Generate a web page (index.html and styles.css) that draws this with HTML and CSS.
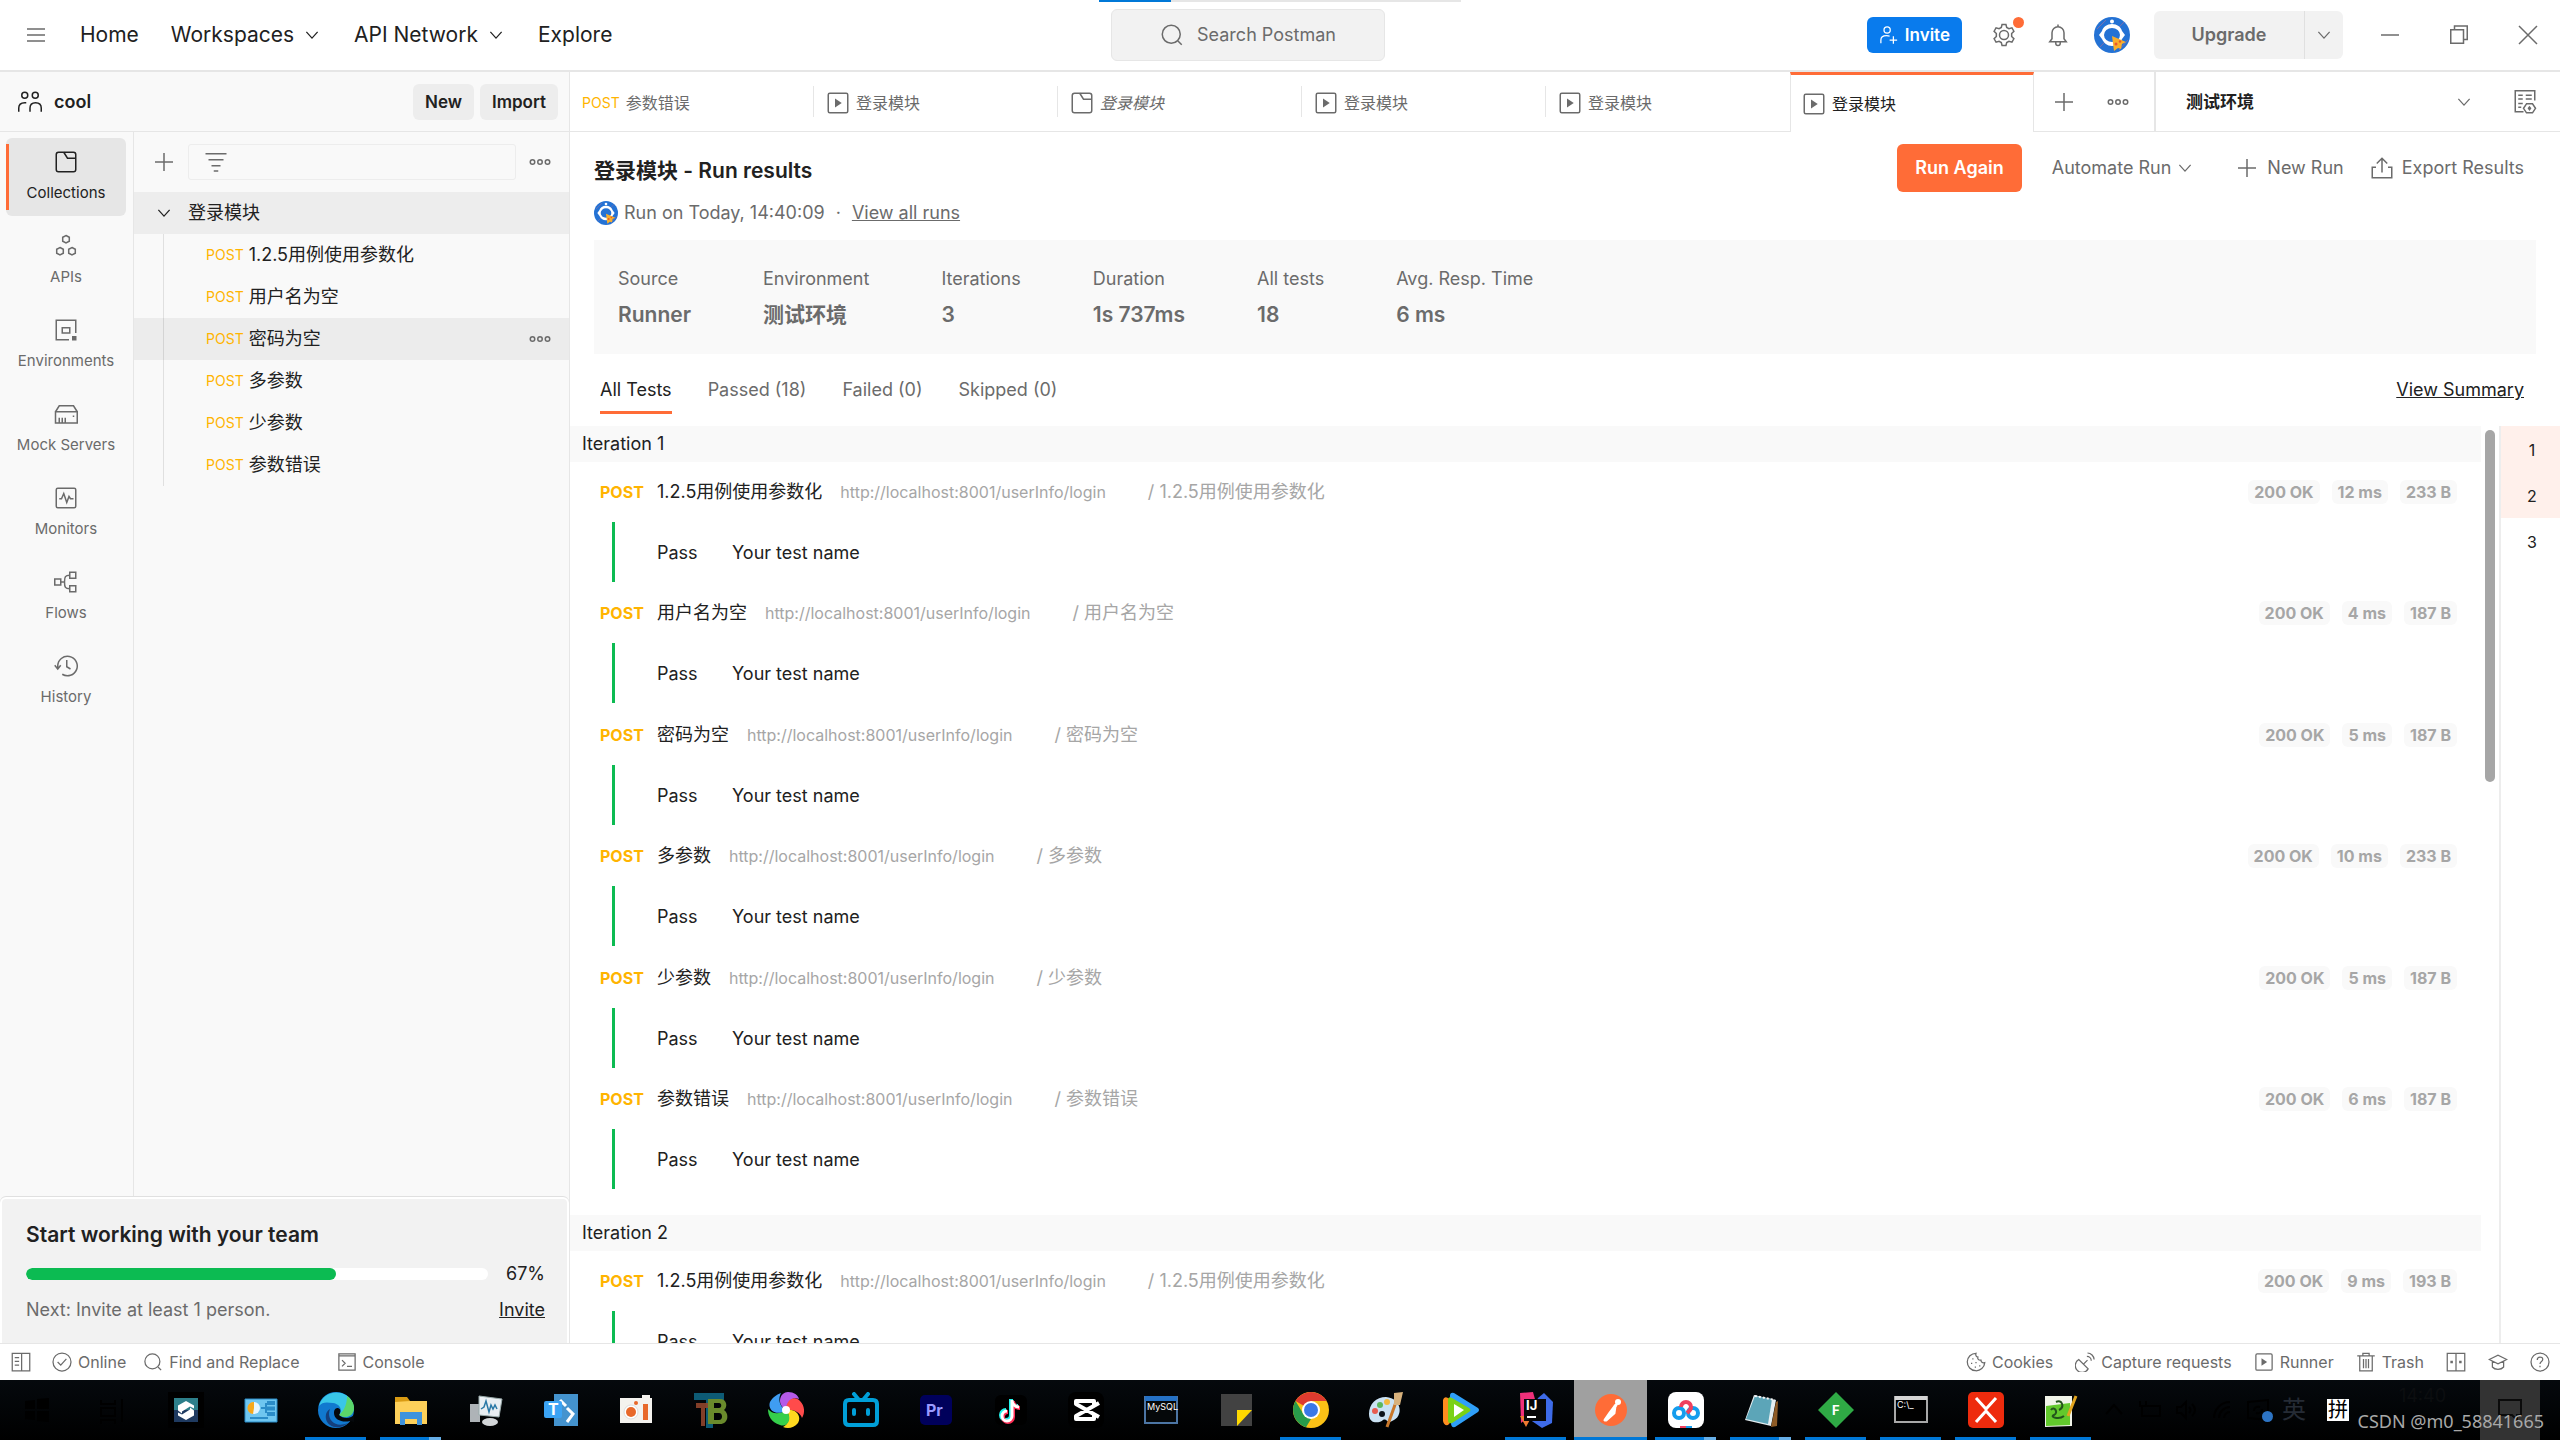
FILE: index.html
```html
<!DOCTYPE html>
<html lang="en">
<head>
  <meta charset="UTF-8">
  <title>登录模块 - Run results</title>
  <link rel="stylesheet" href="styles.css">
</head>
<body>
  <!-- shared icons -->
  <svg class="sprite" aria-hidden="true">
    <symbol id="i-chevron" viewBox="0 0 16 16"><path d="M3.500 5.500 8 10.500l4.500-5"/></symbol>
    <symbol id="i-plus" viewBox="0 0 16 16"><path d="M8 2v12M2 8h12"/></symbol>
    <symbol id="i-dots" viewBox="0 0 16 16"><circle cx="3" cy="8" r="1.500"/><circle cx="8" cy="8" r="1.500"/><circle cx="13" cy="8" r="1.500"/></symbol>
    <symbol id="i-search" viewBox="0 0 16 16"><circle cx="7.500" cy="7.500" r="6"/><path d="m12 12 2.500 2.500"/></symbol>
    <symbol id="i-runner" viewBox="0 0 16 16"><rect x="1.500" y="1.500" width="13" height="13" rx="1"/><path class="solid" d="M6 5v6l4.500-3z"/></symbol>
    <symbol id="i-collection" viewBox="0 0 16 16"><rect x="1.500" y="1.500" width="13" height="13" rx="1.500"/><path d="M6.500 1.500 9 5.500h5.500"/></symbol>
    <symbol id="i-avatar" viewBox="0 0 36 36"><circle class="av-bg" cx="18" cy="18" r="18"/><path class="av-line" d="m3 12 9-9M6 30 30 5M25 33l9-10"/><path class="av-dot" d="M18 7c5 0 9 3 10 7l3 4-3 4c-2 4-5 7-10 7s-8-3-10-7l-3-4 3-4c1-4 5-7 10-7z"/><ellipse class="av-bg" cx="18" cy="18" rx="8" ry="7"/><circle class="av-dot" cx="18" cy="4.500" r="2"/><path class="av-pizza" d="m18 19 14 6-4 2-1 5-3-1-4 3z"/><circle class="av-top" cx="22" cy="27" r="1.500"/><circle class="av-top" cx="26" cy="24.500" r="1.200"/></symbol>
  </svg>

  <header class="topbar">
    <div class="loading-bar"><div class="loading-value"></div></div>
    <nav class="main-nav">
      <button class="menu-btn" aria-label="Menu"><svg class="icon" viewBox="0 0 16 16"><path d="M2 4h12M2 8h12M2 12h12"/></svg></button>
      <a href="#">Home</a>
      <a href="#">Workspaces <svg class="icon small"><use href="#i-chevron"/></svg></a>
      <a href="#">API Network <svg class="icon small"><use href="#i-chevron"/></svg></a>
      <a href="#">Explore</a>
    </nav>
    <button class="search-btn"><svg class="icon"><use href="#i-search"/></svg>Search Postman</button>
    <div class="top-actions">
      <button class="invite-btn"><svg class="icon small" viewBox="0 0 16 16"><circle cx="6.500" cy="4" r="2.500"/><path d="M1.500 14.500V12c0-2.500 2-3.500 4.500-3.500 1 0 2 .2 2.500.5M11.500 9v6M8.500 12h6"/></svg>Invite</button>
      <button class="icon-btn has-alert" aria-label="Settings"><svg class="icon" viewBox="0 0 16 16"><path d="M6.700 1h2.600l.5 2 1.500.8 2-.6 1.300 2.300L13.100 7v2l1.500 1.500-1.300 2.300-2-.6-1.500.8-.5 2H6.700l-.5-2-1.500-.8-2 .6-1.300-2.300L2.900 9V7L1.400 5.500l1.300-2.300 2 .6L6.200 3z"/><circle cx="8" cy="8" r="3"/></svg><span class="alert-dot"></span></button>
      <button class="icon-btn" aria-label="Notifications"><svg class="icon" viewBox="0 0 16 16"><path d="M2.500 12.500h11L12 10.500V6.500a4 4 0 0 0-8 0v4zM6.500 13v.5a1.500 1.500 0 0 0 3 0V13M8 1v1.500"/></svg></button>
      <button class="icon-btn profile" aria-label="Profile"><svg class="avatar"><use href="#i-avatar"/></svg></button>
      <div class="upgrade">
        <button class="upgrade-btn">Upgrade</button>
        <button class="upgrade-more" aria-label="More plans"><svg class="icon small"><use href="#i-chevron"/></svg></button>
      </div>
      <div class="window-controls">
        <button aria-label="Minimize"><svg class="icon" viewBox="0 0 16 16"><path d="M2 8h12"/></svg></button>
        <button aria-label="Restore"><svg class="icon" viewBox="0 0 16 16"><path d="M2.500 4.500h8.500v9H2.500zM5 4.500v-2.500h8.500v9H11"/></svg></button>
        <button aria-label="Close"><svg class="icon" viewBox="0 0 16 16"><path d="m2 2 12 12M14 2 2 14"/></svg></button>
      </div>
    </div>
  </header>

  <div class="workspace">
    <aside class="left">
      <div class="workspace-head">
        <svg class="icon dark" viewBox="0 0 16 16"><circle cx="4.500" cy="3.500" r="2"/><circle cx="11.500" cy="3.500" r="2"/><path d="M.5 14.500V12c0-2.500 1.500-3.500 4-3.500h1M8 14.500V12c0-2.500 1.200-3.500 3.700-3.500S15.500 9.500 15.500 12v2.500"/></svg>
        <strong>cool</strong>
        <button class="grey-btn">New</button>
        <button class="grey-btn">Import</button>
      </div>
      <div class="left-body">
        <nav class="rail">
          <a href="#" class="rail-item active"><svg class="icon"><use href="#i-collection"/></svg>Collections</a>
          <a href="#" class="rail-item"><svg class="icon" viewBox="0 0 16 16"><path d="m8 1 2.200 1.200v2.600L8 6 5.800 4.800V2.200zM4 9l2.200 1.200v2.600L4 14l-2.200-1.200v-2.600zM12 9l2.200 1.200v2.600L12 14l-2.200-1.200v-2.600z"/></svg>APIs</a>
          <a href="#" class="rail-item"><svg class="icon" viewBox="0 0 16 16"><path d="M10 14.500H1.500v-13h13V10M5.500 6.500h5v3.500h-5z"/><path class="solid" d="M12 12h3v3h-3z"/></svg>Environments</a>
          <a href="#" class="rail-item"><svg class="icon" viewBox="0 0 16 16"><path d="M1 6.500h14.500V14H1zM1 6.500 3.500 2.500H13l2.500 4M3.500 10.500V14M5.500 10.500V14M7.500 10.500V14M12.500 9.500h1"/></svg>Mock Servers</a>
          <a href="#" class="rail-item"><svg class="icon" viewBox="0 0 16 16"><rect x="1.500" y="1.500" width="13" height="13" rx="1"/><path d="M3.500 8.500h1.500L6.500 5l2 6 1.500-4 1 1.500h2"/></svg>Monitors</a>
          <a href="#" class="rail-item"><svg class="icon" viewBox="0 0 16 16"><rect x=".5" y="6" width="4" height="4"/><rect x="10.500" y="1.500" width="4" height="4"/><rect x="10.500" y="10.500" width="4" height="4"/><path d="M4.500 8h2M10.500 3.500c-3 0-3.500 1-3.500 4.500 0 3.500.5 4.500 3.500 4.500"/></svg>Flows</a>
          <a href="#" class="rail-item"><svg class="icon" viewBox="0 0 16 16"><path d="M2.500 9.500V8a6.500 6.500 0 1 1 3 5.500M.5 7.500l2 2.500 2-2.500M8.500 4v4.500L11 10"/></svg>History</a>
        </nav>
        <div class="sidebar">
          <div class="filter-row">
            <button class="icon-btn" aria-label="Create"><svg class="icon"><use href="#i-plus"/></svg></button>
            <label class="filter"><svg class="icon" viewBox="0 0 16 16"><path d="M1 2.500h14M3 6.500h10M5 10.500h6M6.500 14h3"/></svg><input type="text" aria-label="Filter collections"></label>
            <button class="icon-btn" aria-label="More"><svg class="icon dots"><use href="#i-dots"/></svg></button>
          </div>
          <div class="tree-root"><svg class="icon small dark"><use href="#i-chevron"/></svg>登录模块</div>
          <ul class="tree">
            <li><span class="method">POST</span>1.2.5用例使用参数化</li>
            <li><span class="method">POST</span>用户名为空</li>
            <li class="hovered"><span class="method">POST</span>密码为空<button class="icon-btn" aria-label="Request options"><svg class="icon dots"><use href="#i-dots"/></svg></button></li>
            <li><span class="method">POST</span>多参数</li>
            <li><span class="method">POST</span>少参数</li>
            <li><span class="method">POST</span>参数错误</li>
          </ul>
        </div>
      </div>
      <section class="team-card">
        <h2>Start working with your team</h2>
        <div class="team-progress">
          <div class="track"><div class="value" style="width: 67%"></div></div>
          <span>67%</span>
        </div>
        <div class="team-next"><span>Next: Invite at least 1 person.</span><a href="#">Invite</a></div>
      </section>
    </aside>

    <main class="content">
      <div class="tabbar">
        <button class="tab"><span class="method">POST</span>参数错误</button>
        <button class="tab"><svg class="icon"><use href="#i-runner"/></svg>登录模块</button>
        <button class="tab preview"><svg class="icon"><use href="#i-collection"/></svg>登录模块</button>
        <button class="tab"><svg class="icon"><use href="#i-runner"/></svg>登录模块</button>
        <button class="tab"><svg class="icon"><use href="#i-runner"/></svg>登录模块</button>
        <button class="tab active"><svg class="icon"><use href="#i-runner"/></svg>登录模块</button>
        <div class="tab-tools">
          <button class="icon-btn" aria-label="New tab"><svg class="icon"><use href="#i-plus"/></svg></button>
          <button class="icon-btn" aria-label="Tab options"><svg class="icon dots"><use href="#i-dots"/></svg></button>
        </div>
        <button class="env-select">测试环境<svg class="icon small"><use href="#i-chevron"/></svg></button>
        <button class="icon-btn env-view" aria-label="Environment quick look"><svg class="icon" viewBox="0 0 16 16"><path d="M7 14.500H1.500v-14h13V7M3.500 3.500h3M8.500 3.500h4M3.500 6h3M8.500 6h4M3.500 9h3M3.500 11.500h2"/><path d="m9 9.200-2 3 2 3h4l2-3-2-3z"/><path class="solid" d="m11 10.500 1.300 1.700L11 14l-1.300-1.800z"/></svg></button>
      </div>

      <div class="run-head">
        <div class="run-title">
          <h1>登录模块 - Run results</h1>
          <p><svg class="avatar mini"><use href="#i-avatar"/></svg>Run on Today, 14:40:09<span class="sep">·</span><a href="#">View all runs</a></p>
        </div>
        <div class="run-actions">
          <button class="primary-btn">Run Again</button>
          <button class="text-btn automate">Automate Run<svg class="icon small"><use href="#i-chevron"/></svg></button>
          <button class="text-btn"><svg class="icon"><use href="#i-plus"/></svg>New Run</button>
          <button class="text-btn"><svg class="icon" viewBox="0 0 16 16"><path d="M4 7.500H1.500v7h13v-7H12M8 11V1.500M4.500 5 8 1.500 11.500 5"/></svg>Export Results</button>
        </div>
      </div>

      <dl class="summary">
        <div><dt>Source</dt><dd>Runner</dd></div>
        <div><dt>Environment</dt><dd>测试环境</dd></div>
        <div><dt>Iterations</dt><dd>3</dd></div>
        <div><dt>Duration</dt><dd>1s 737ms</dd></div>
        <div><dt>All tests</dt><dd>18</dd></div>
        <div><dt>Avg. Resp. Time</dt><dd>6 ms</dd></div>
      </dl>

      <div class="result-tabs">
        <button class="active">All Tests</button>
        <button>Passed (18)</button>
        <button>Failed (0)</button>
        <button>Skipped (0)</button>
        <a href="#">View Summary</a>
      </div>

      <div class="results">
        <div class="result-list">
          <h3>Iteration 1</h3>
          <div class="iteration">
            <article>
              <div class="request"><b>POST</b><span class="name">1.2.5用例使用参数化</span><span class="url">http://localhost:8001/userInfo/login</span><span class="path">/ 1.2.5用例使用参数化</span><span class="chips"><span>200 OK</span><span>12 ms</span><span>233 B</span></span></div>
              <div class="test"><span>Pass</span><span>Your test name</span></div>
            </article>
            <article>
              <div class="request"><b>POST</b><span class="name">用户名为空</span><span class="url">http://localhost:8001/userInfo/login</span><span class="path">/ 用户名为空</span><span class="chips"><span>200 OK</span><span>4 ms</span><span>187 B</span></span></div>
              <div class="test"><span>Pass</span><span>Your test name</span></div>
            </article>
            <article>
              <div class="request"><b>POST</b><span class="name">密码为空</span><span class="url">http://localhost:8001/userInfo/login</span><span class="path">/ 密码为空</span><span class="chips"><span>200 OK</span><span>5 ms</span><span>187 B</span></span></div>
              <div class="test"><span>Pass</span><span>Your test name</span></div>
            </article>
            <article>
              <div class="request"><b>POST</b><span class="name">多参数</span><span class="url">http://localhost:8001/userInfo/login</span><span class="path">/ 多参数</span><span class="chips"><span>200 OK</span><span>10 ms</span><span>233 B</span></span></div>
              <div class="test"><span>Pass</span><span>Your test name</span></div>
            </article>
            <article>
              <div class="request"><b>POST</b><span class="name">少参数</span><span class="url">http://localhost:8001/userInfo/login</span><span class="path">/ 少参数</span><span class="chips"><span>200 OK</span><span>5 ms</span><span>187 B</span></span></div>
              <div class="test"><span>Pass</span><span>Your test name</span></div>
            </article>
            <article>
              <div class="request"><b>POST</b><span class="name">参数错误</span><span class="url">http://localhost:8001/userInfo/login</span><span class="path">/ 参数错误</span><span class="chips"><span>200 OK</span><span>6 ms</span><span>187 B</span></span></div>
              <div class="test"><span>Pass</span><span>Your test name</span></div>
            </article>
          </div>
          <h3>Iteration 2</h3>
          <div class="iteration">
            <article>
              <div class="request"><b>POST</b><span class="name">1.2.5用例使用参数化</span><span class="url">http://localhost:8001/userInfo/login</span><span class="path">/ 1.2.5用例使用参数化</span><span class="chips"><span>200 OK</span><span>9 ms</span><span>193 B</span></span></div>
              <div class="test"><span>Pass</span><span>Your test name</span></div>
            </article>
          </div>
        </div>
        <div class="scrollbar"><div class="thumb"></div></div>
        <nav class="iteration-nav">
          <a href="#" class="visible">1</a>
          <a href="#" class="visible">2</a>
          <a href="#">3</a>
        </nav>
      </div>
    </main>
  </div>

  <footer class="statusbar">
    <button class="pane-btn" aria-label="Toggle sidebar"><svg class="icon small" viewBox="0 0 16 16"><path d="M1 1h14v14H1zM8.500 1v14M3 4.500h3.500M3 7.500h3.500M3 10.500h3.500"/></svg></button>
    <button><svg class="icon small" viewBox="0 0 16 16"><circle cx="8" cy="8" r="7.200"/><path d="m4.500 8 2.500 2.500 4.500-5"/></svg>Online</button>
    <button><svg class="icon small"><use href="#i-search"/></svg>Find and Replace</button>
    <button class="console-btn"><svg class="icon small" viewBox="0 0 16 16"><path d="M1.500 1.500h13v13h-13zM1.500 3h13M4 6.500 6.500 9 4 11.500M8 11.500h4"/></svg>Console</button>
    <div class="status-right">
      <button><svg class="icon small" viewBox="0 0 16 16"><path d="M8 1a7 7 0 1 0 7 7.500c-2 .5-3-.5-3-2-2 .3-3-1-2.500-2.500C8 4 7.500 2.500 8 1z"/><path d="M5 5.500h1M4 9h1M7.500 8.500h1M7 12h1M10.500 11h1"/></svg>Cookies</button>
      <button><svg class="icon small" viewBox="0 0 16 16"><path d="M3 6a5.500 5.500 0 1 0 7.500 7.500zM7 9.500 10 6.500M9.500 3.500a3.500 3.500 0 0 1 3.500 3.500M10 .8A5.500 5.500 0 0 1 15.300 6"/></svg>Capture requests</button>
      <button><svg class="icon small"><use href="#i-runner"/></svg>Runner</button>
      <button><svg class="icon small" viewBox="0 0 16 16"><path d="M1 3h14M5.500 3V1h5v2M3 3v12h10V3M6 5.500V13M8 5.500V13M10 5.500V13"/></svg>Trash</button>
      <button aria-label="Two-pane view"><svg class="icon small" viewBox="0 0 16 16"><path d="M1 1h14v14H1zM8 1v14"/><path class="solid" d="M3.500 7h2v2h-2zM10.500 7h2v2h-2z"/></svg></button>
      <button aria-label="Bootcamp"><svg class="icon small" viewBox="0 0 16 16"><path d="M1 6 8 2.500 15 6 8 9.500zM3.500 7.500V12c2 2.500 7 2.500 9 0V7.500"/></svg></button>
      <button aria-label="Help"><svg class="icon small" viewBox="0 0 16 16"><circle cx="8" cy="8" r="7.200"/><path d="M5.800 6.300c0-3 4.400-3 4.400-.3 0 1.500-2.200 1.700-2.200 3.500M8 11v1.200"/></svg></button>
    </div>
  </footer>

  <div class="taskbar">
    <div class="task system"><svg viewBox="0 0 36 36"><path fill="#000" d="M6 9l10-1v9H6zM18 7l12-1v11H18zM6 19h10v9L6 27zM18 19h12v11l-12-1z"/></svg></div>
    <div class="task system"><svg viewBox="0 0 36 36"><path fill="none" stroke="#000" stroke-width="2" d="M8 8v4h14V8M8 16h14v8H8zM8 32v-4h14v4M29 7v23"/></svg></div>
    <div class="task"><svg viewBox="0 0 36 36"><path fill="#000" d="M0 0h36v36H0z"/><path fill="#2d7f8a" d="M6 6h24v12H6z"/><path fill="#1f3a60" d="M6 18h24v12H6z"/><path fill="#fff" d="m18 9 8 4.500v3l-4-2-8 5v2l-4-3V13.500zM18 28l-8-4.500v-3l4 2 8-5v-2l4 3v5z"/></svg></div>
    <div class="task"><svg viewBox="0 0 36 36"><path fill="#6fc6f0" stroke="#2b8cc8" d="M2 7h32v23H2z"/><circle cx="11" cy="16" r="6" fill="#e6f6ff"/><path fill="#f5a81c" d="M11 16v-6a6 6 0 0 0-1 12z"/><path stroke="#2b8cc8" stroke-width="2" fill="none" d="M18 16h5M23 11v10M7 26h18"/><path fill="#2b8cc8" d="M24 9h8v4h-8zM24 14.500h8v4h-8zM24 20h8v4h-8z"/></svg></div>
    <div class="task running"><svg viewBox="0 0 36 36"><circle cx="18" cy="18" r="18" fill="#1179cf"/><path fill="#39c6e8" d="M1 14C4 2 17-3 28 3c8 5 10 15 5 20-4 3-10 2-12 0 4-5 1-11-6-12S4 10 1 14z"/><path fill="#5bd66a" d="M29 4c8 5 9 15 4 19-4 3-10 2-12 0 6-5 8-12 8-19z"/><path fill="#153f7c" d="M12 17c-4 9 4 20 18 14-8 7-20 5-22-4-1-5 1-8 4-10z"/><path fill="#05080c" d="M21 23c3 3 8 4 12 2 2-1 3-2 3-3v8l-4-1c-7 2-16-1-16-8 0-4 2-5 4-5 3 1 3 4 1 7z"/></svg></div>
    <div class="task running multi"><svg viewBox="0 0 36 36"><path fill="#d99b13" d="M2 5h12l3 4v4H2z"/><path fill="#fdd05a" d="M2 10 17 9h17v23H2z"/><path fill="#3f93dd" d="M7 20h22v13h-5v-6H12v6H7z"/></svg></div>
    <div class="task"><svg viewBox="0 0 36 36"><path fill="#aeb3b7" d="M2 12h10v18H2z"/><path fill="#e9eef2" stroke="#9aa" d="m11 4 23 3-3 18-20-2z"/><path fill="none" stroke="#2a78a6" stroke-width="1.500" d="m13 17 3-2 2-6 3 11 2-7 2 4 2-4 2 4"/><ellipse cx="22" cy="30" rx="8" ry="4" fill="#d3d6d8"/></svg></div>
    <div class="task"><svg viewBox="0 0 36 36"><path fill="#4493ce" d="M11 2h24v32H11z"/><path fill="none" stroke="#fff" stroke-width="3" d="m17 8 6 6M24 16l6 6-6 8"/><rect x="1" y="9" width="18" height="17" rx="2" fill="#3ba3f4"/><text x="5" y="23" class="glyph">T</text></svg></div>
    <div class="task"><svg viewBox="0 0 36 36"><path fill="#f4f2ee" d="M2 6h32v25H2zM24 3h8v5h-8z"/><circle cx="13" cy="20" r="7" fill="#fff" stroke="#ddd"/><circle cx="13" cy="20" r="5" fill="#e8682a"/><circle cx="18" cy="11" r="2" fill="#e8682a"/><path fill="#e8682a" d="M25 12h5v16h-5z"/></svg></div>
    <div class="task"><svg viewBox="0 0 36 36"><path fill="#0d5b75" d="M1 1h30v7H20v28h-7V8H1z"/><path fill="#90452c" d="M3 11h14v5h-5v18H8V16H3z" opacity=".9"/><path fill="#6a8a2c" fill-rule="evenodd" d="M15 7h12c7 0 8 8 4 11 5 3 5 14-4 14H15zm6 4v5h5c3 0 3-5 0-5zm0 10v7h5c4 0 4-7 0-7z"/></svg></div>
    <div class="task"><svg viewBox="0 0 36 36"><path fill="#b45ae8" d="M18 18C8 12 12 0 20 0c6 0 10 3 11 7-6-3-12 2-13 11z"/><path fill="#ff4b4b" d="M18 18c0-11 9-15 14-9 5 5 5 12 2 17-2-6-9-9-16-8z"/><path fill="#ffd91f" d="M18 18c10-2 16 6 12 13-4 5-10 6-15 4 6-3 8-11 3-17z"/><path fill="#35cf4b" d="M18 18c7 8 2 18-6 15C3 30 0 24 0 17c4 5 11 6 18 1z"/><path fill="#3f9df2" d="M18 18C9 25-1 18 2 10 5 5 8 3 13 1c-3 6-2 13 5 17z"/><circle cx="18" cy="18" r="4" fill="#fff"/></svg></div>
    <div class="task"><svg viewBox="0 0 36 36"><path fill="none" stroke="#009fd8" stroke-width="4" stroke-linecap="round" stroke-linejoin="round" d="M11 2l5 6M25 2l-5 6M6 8h24q4 0 4 4v17q0 4-4 4H6q-4 0-4-4V12q0-4 4-4zM11 18v4M25 18v4"/></svg></div>
    <div class="task"><svg viewBox="0 0 36 36"><rect x="2" y="3" width="32" height="30" rx="5" fill="#00005b"/><text x="8" y="24" class="glyph pr">Pr</text></svg></div>
    <div class="task"><svg viewBox="0 0 36 36"><rect x="2" y="3" width="32" height="30" rx="6" fill="#000"/><path fill="none" stroke="#25f4ee" stroke-width="4" d="M18 7v16a5 5 0 1 1-5-5M18 8c1 4 4 6 7 6"/><path fill="none" stroke="#fe2c55" stroke-width="4" d="M20 9v16a5 5 0 1 1-5-5M20 10c1 4 4 6 7 6"/><path fill="none" stroke="#fff" stroke-width="3" d="M19 8v16a5 5 0 1 1-5-5M19 9c1 4 4 6 7 6"/></svg></div>
    <div class="task"><svg viewBox="0 0 36 36"><rect width="36" height="36" rx="8" fill="#000"/><path fill="none" stroke="#fff" stroke-width="4" stroke-linejoin="round" d="M31 11 8 24v3h18v-4M31 25 8 12V9h18v4"/></svg></div>
    <div class="task"><svg viewBox="0 0 36 36"><path fill="#05080a" stroke="#4c75a4" stroke-width="2" d="M2 5h32v26H2z"/><path fill="#2571c5" d="M2 4h32v5H2z"/><text x="4" y="18" class="glyph tiny">MySQL</text></svg></div>
    <div class="task"><svg viewBox="0 0 36 36"><path fill="#424242" d="M3 2h31v32H3z"/><path fill="#ffd900" d="M19 18h15L19 34z"/></svg></div>
    <div class="task running"><svg viewBox="0 0 36 36"><circle cx="18" cy="18" r="18" fill="#fbc116"/><path fill="#de3b2f" d="M18 18 2.500 9A18 18 0 0 1 33.600 9H18z"/><path fill="#289b4a" d="M2.500 9 11 23l7 4-5 8.300A18 18 0 0 1 2.500 9z"/><circle cx="18" cy="18" r="9" fill="#fff"/><circle cx="18" cy="18" r="7" fill="#3b78e7"/></svg></div>
    <div class="task"><svg viewBox="0 0 36 36"><path fill="#cbe2f3" d="M18 5C34 6 36 25 24 29c-5 3-5-3-9-1-3 3-14 5-14-6C1 12 8 5 18 5z"/><circle cx="7" cy="19" r="3" fill="#e75c50"/><circle cx="12" cy="13" r="3" fill="#5cb85c"/><circle cx="19" cy="10" r="3" fill="#f4b93e"/><circle cx="14" cy="22" r="3" fill="#0d151c"/><path stroke="#c9782b" stroke-width="3" d="M28 10 19 35"/><path fill="#d7b17c" d="m26 1 9-1-3 13h-6z"/></svg></div>
    <div class="task"><svg viewBox="0 0 36 36"><path fill="#ff8d1e" d="M0 8q1-4 5-2l14 12L5 33q-4 1-5-4z"/><path fill="#2f9ff8" d="M7 4q0-4 4-3l24 15q2 2 0 4L12 35q-4 1-4-4z"/><path fill="#7bd116" d="M5 8q0-4 4-2l17 10q3 2 0 4L9 31q-4 1-4-3z"/><path fill="#fff" d="m11 12 10 6-10 7z"/></svg></div>
    <div class="task running"><svg viewBox="0 0 36 36"><path fill="#f0307a" d="M2 1 15 0l5 18L3 31z"/><path fill="#3e6be8" d="m20 6 6-5 9 9-1 21-10 5-13-9z"/><path fill="#ef7a30" d="M2 24h12l-6 11z"/><path fill="#080808" d="M6 7h22v22H6z"/><text x="8" y="18" class="glyph ij">IJ</text><path fill="#fff" d="M9 24h9v2H9z"/></svg></div>
    <div class="task running current"><svg viewBox="0 0 36 36"><circle cx="18" cy="18" r="16" fill="#ff6c37"/><circle cx="25" cy="10" r="3" fill="#fff"/><path fill="none" stroke="#fff" stroke-width="3" stroke-linecap="round" d="m23 13-6 8-5 7M22 14l-1 7-8 7"/></svg></div>
    <div class="task running multi"><svg viewBox="0 0 36 36"><rect width="36" height="36" rx="8" fill="#fff"/><g fill="none" stroke-width="4"><circle cx="11" cy="21" r="5" stroke="#159ded"/><circle cx="25" cy="21" r="5" stroke="#159ded"/><path stroke="#f0415e" d="M13 15a5 5 0 1 1 10 0q0 3-4 6"/></g><path fill="#f0415e" d="M12 34h6v2h-6z"/><path fill="#159ded" d="M18 34h6v2h-6z"/></svg></div>
    <div class="task running multi"><svg viewBox="0 0 36 36"><path fill="#e4edf0" d="m11 3 22 5-5 26-26-6z"/><path fill="#5ca5b8" d="m12 4 17 3-4 25-22-5z"/><path fill="#8e5b26" d="m33 10 2-1-1 25-6 1z"/><path stroke="#f4f4f4" stroke-width="2" stroke-dasharray="2 2" d="m12 4 20 4"/></svg></div>
    <div class="task running"><svg viewBox="0 0 36 36"><path fill="#2faa45" d="m18 0 18 18-18 18L0 18z"/><text x="14" y="23" class="glyph ij">F</text></svg></div>
    <div class="task running"><svg viewBox="0 0 36 36"><path fill="#000" stroke="#a8a8a8" stroke-width="2" d="M2 5h32v25H2z"/><path fill="#d5d5d5" d="M2 4h32v4H2z"/><text x="4" y="16" class="glyph tiny">C:\_</text></svg></div>
    <div class="task running"><svg viewBox="0 0 36 36"><rect width="36" height="36" rx="5" fill="#ee2b0d"/><path fill="none" stroke="#fff" stroke-width="3" d="m8 6 10 11L28 6M8 30l10-11 10 11"/></svg></div>
    <div class="task running"><svg viewBox="0 0 36 36"><path fill="#f1f4e9" d="M2 4h27v30L2 35z"/><path fill="#62c92c" d="m3 14 24-3v22L3 34z"/><path fill="none" stroke="#23541b" stroke-width="2" d="M8 18c3-5 8 3 3 5s5 5 10 1M13 10c6-3 9 5 3 8"/><path stroke="#e2a51f" stroke-width="3" d="m33 4-8 20"/></svg></div>

    <div class="tray">
      <svg class="tray-icon" viewBox="0 0 24 24"><path d="m4 16 8-9 8 9"/></svg>
      <svg class="tray-icon" viewBox="0 0 24 24"><path d="M4 8h18v10H4zM2 3v5h6V3"/></svg>
      <svg class="tray-icon" viewBox="0 0 24 24"><path d="M3 9h4l5-5v16l-5-5H3zM15 9q3 3 0 6M18 6q6 6 0 12"/></svg>
      <svg class="tray-icon" viewBox="0 0 24 24"><path d="M4 20A16 16 0 0 1 20 4M9 20A11 11 0 0 1 20 9M14 20a6 6 0 0 1 6-6"/></svg>
      <span class="sync"><svg class="tray-icon" viewBox="0 0 24 24"><path d="m2 4 20-2v20L2 20zM8 13q0-5 6-4M16 11q0 5-6 4"/></svg><i></i></span>
      <span class="ime">英</span>
      <span class="pinyin">拼</span>
      <span class="clock">14:40</span>
      <span class="notify"><svg class="tray-icon" viewBox="0 0 24 24"><path d="M1 2h22v15h-4v5l-5-5H1z"/></svg></span>
      <span class="watermark">CSDN @m0_58841665</span>
    </div>
  </div>
</body>
</html>
```
FILE: styles.css
```css
* {
    box-sizing: border-box;
}

body {
    margin: 0;
    height: 100vh;
    display: flex;
    flex-direction: column;
    overflow: hidden;
    font-family: Inter, "Noto Sans CJK SC", sans-serif;
    font-size: 18px;
    line-height: 24px;
    color: #212121;
    background: #fff;
}

h1, h2, h3, p, ul, dl, dd {
    margin: 0;
    padding: 0;
}

button {
    display: flex;
    align-items: center;
    justify-content: center;
    padding: 0;
    border: none;
    background: none;
    font: inherit;
    color: #6b6b6b;
    white-space: nowrap;
    cursor: pointer;
}

a {
    color: inherit;
}

.sprite {
    position: absolute;
    width: 0;
    height: 0;
}

.icon {
    width: 24px;
    height: 24px;
    flex: none;
    fill: none;
    stroke: #6b6b6b;
    stroke-width: 1;
}

.icon.small {
    width: 20px;
    height: 20px;
}

.icon.dark {
    stroke: #212121;
}

.icon .solid, .solid {
    fill: #6b6b6b;
    stroke: none;
}

.icon-btn {
    width: 24px;
    height: 24px;
    flex: none;
}

.av-bg {
    fill: #2472d4;
}

.av-line {
    fill: none;
    stroke: #7a6fae;
    stroke-width: 1;
}

.av-dot {
    fill: #fff;
}

.av-pizza {
    fill: #f9ae2b;
}

.av-top {
    fill: #e8562f;
}

.avatar {
    width: 36px;
    height: 36px;
    flex: none;
}

.avatar.mini {
    width: 24px;
    height: 24px;
}

.method {
    color: #ffb400;
    font-size: 14px;
}

/* top bar */
.topbar {
    position: relative;
    flex: none;
    height: 72px;
    padding: 0 20px 0 24px;
    display: grid;
    grid-template-columns: 1fr auto 1fr;
    align-items: center;
    border-bottom: 2px solid #e6e6e6;
}

.loading-bar {
    position: absolute;
    top: 0;
    left: 50%;
    width: 362px;
    height: 2px;
    margin-left: -181px;
    background: #e6e6e6;
}

.loading-value {
    width: 20%;
    height: 100%;
    background: #0078d7;
}

.main-nav {
    display: flex;
    align-items: center;
    gap: 32px;
    font-size: 21px;
}

.main-nav a {
    display: flex;
    align-items: center;
    gap: 8px;
    text-decoration: none;
    white-space: nowrap;
}

.main-nav .small {
    stroke: #212121;
}

.search-btn {
    width: 274px;
    height: 52px;
    margin-right: 68px;
    gap: 13px;
    background: #f2f2f2;
    border: 1px solid #e6e6e6;
    border-radius: 6px;
}

.top-actions {
    display: flex;
    align-items: center;
    justify-content: flex-end;
    gap: 30px;
}

.invite-btn {
    height: 36px;
    padding: 0 12px;
    gap: 6px;
    background: #097bed;
    border-radius: 6px;
    color: #fff;
    font-size: 17px;
    font-weight: 600;
}

.invite-btn .icon {
    stroke: #fff;
}

.has-alert {
    position: relative;
}

.alert-dot {
    position: absolute;
    top: -6px;
    right: -8px;
    width: 11px;
    height: 11px;
    border-radius: 50%;
    background: #ff6c37;
}

.profile {
    width: 36px;
    height: 36px;
    margin: 0 -6px;
}

.upgrade {
    display: flex;
    height: 48px;
    background: #f2f2f2;
    border-radius: 6px;
}

.upgrade-btn {
    width: 150px;
    font-weight: 600;
}

.upgrade-more {
    width: 39px;
    border-left: 1px solid #e0e0e0;
}

.window-controls {
    display: flex;
    gap: 45px;
    margin-left: 5px;
}

/* left side */
.workspace {
    flex: 1;
    min-height: 0;
    display: flex;
}

.left {
    width: 570px;
    flex: none;
    display: flex;
    flex-direction: column;
    background: #f9f9f9;
    border-right: 1px solid #e6e6e6;
}

.workspace-head {
    height: 60px;
    flex: none;
    display: flex;
    align-items: center;
    gap: 6px;
    padding: 0 11px 0 18px;
    border-bottom: 1px solid #e6e6e6;
}

.workspace-head strong {
    flex: 1;
    margin-left: 6px;
    font-weight: 600;
}

.grey-btn {
    height: 36px;
    padding: 0 12px;
    border-radius: 6px;
    background: #ededed;
    color: #212121;
    font-size: 17px;
    font-weight: 600;
}

.left-body {
    flex: 1;
    display: flex;
    min-height: 0;
}

.rail {
    width: 134px;
    flex: none;
    display: flex;
    flex-direction: column;
    gap: 6px;
    padding: 6px 7px 0 6px;
    border-right: 1px solid #e6e6e6;
}

.rail-item {
    height: 78px;
    display: flex;
    flex-direction: column;
    align-items: center;
    gap: 7px;
    padding-top: 12px;
    border-radius: 6px;
    color: #6b6b6b;
    font-size: 15px;
    text-decoration: none;
    white-space: nowrap;
}

.rail-item.active {
    position: relative;
    background: #e6e6e6;
    color: #212121;
}

.rail-item.active::before {
    content: "";
    position: absolute;
    left: 0;
    top: 6px;
    bottom: 6px;
    width: 3px;
    background: #ff6c37;
}

.rail-item.active .icon {
    stroke: #212121;
}

.sidebar {
    flex: 1;
    min-width: 0;
}

.filter-row {
    display: flex;
    align-items: center;
    gap: 12px;
    padding: 12px 17px 12px 18px;
}

.filter {
    flex: 1;
    min-width: 0;
    height: 36px;
    display: flex;
    align-items: center;
    padding-left: 15px;
    border: 1px solid #ededed;
    border-radius: 3px;
}

.filter input {
    flex: 1;
    min-width: 0;
    border: none;
    outline: none;
    background: none;
    font: inherit;
}

.tree-root {
    height: 42px;
    display: flex;
    align-items: center;
    gap: 14px;
    padding-left: 20px;
    background: #ededed;
}

.tree {
    list-style: none;
    background: linear-gradient(#e0e0e0, #e0e0e0) 29px 0 / 1px 100% no-repeat;
}

.tree li {
    height: 42px;
    display: flex;
    align-items: center;
    gap: 5px;
    padding: 0 17px 0 72px;
}

.tree li.hovered {
    background: rgba(0, 0, 0, 0.05);
}

.tree .icon-btn {
    margin-left: auto;
}

.team-card {
    flex: none;
    padding: 24px 22px 21px 24px;
    border: 2px solid #fff;
    border-bottom: none;
    border-radius: 6px 6px 0 0;
    background: #f2f2f2;
    box-shadow: 0 -1px 0 #e0e0e0;
}

.team-card h2 {
    font-size: 21px;
    line-height: 24px;
    font-weight: 600;
}

.team-progress {
    display: flex;
    align-items: center;
    gap: 18px;
    margin-top: 15px;
}

.team-progress .track {
    flex: 1;
    height: 12px;
    border-radius: 6px;
    background: #fff;
    overflow: hidden;
}

.team-progress .value {
    height: 100%;
    border-radius: 6px;
    background: #0cbb52;
}

.team-next {
    display: flex;
    justify-content: space-between;
    margin-top: 12px;
    color: #6b6b6b;
}

.team-next a {
    color: #212121;
}

/* tabs */
.content {
    flex: 1;
    min-width: 0;
    display: flex;
    flex-direction: column;
}

.tabbar {
    height: 60px;
    flex: none;
    display: flex;
    border-bottom: 1px solid #e6e6e6;
}

.tab {
    position: relative;
    width: 244px;
    justify-content: flex-start;
    gap: 6px;
    padding-left: 12px;
    padding-top: 2px;
    font-size: 16px;
}

.tab:not(.active)::after {
    content: "";
    position: absolute;
    right: 0;
    top: 14px;
    bottom: 14px;
    width: 1px;
    background: #e6e6e6;
}

.tab:nth-child(5)::after {
    display: none;
}

.tab.preview {
    font-style: italic;
}

.tab.active {
    margin-bottom: -1px;
    padding: 0 0 0 11px;
    background: #fff;
    border: 1px solid #e6e6e6;
    border-top: 3px solid #ff6c37;
    border-bottom: none;
    color: #212121;
}

.tab-tools {
    display: flex;
    align-items: center;
    gap: 30px;
    padding: 0 24px 0 18px;
    border-right: 2px solid #e6e6e6;
}

.env-select {
    flex: 1;
    justify-content: space-between;
    padding: 0 19px 0 30px;
    color: #212121;
    font-size: 17px;
    font-weight: 700;
}

.env-view {
    align-self: center;
    margin: 0 23px 0 20px;
}

/* run header */
.run-head {
    display: flex;
    justify-content: space-between;
    padding: 12px 36px 0 24px;
}

.run-title h1 {
    margin-top: 14px;
    font-size: 21px;
    line-height: 26px;
    font-weight: 600;
}

.run-title p {
    display: flex;
    align-items: center;
    gap: 6px;
    margin-top: 17px;
    color: #6b6b6b;
}

.run-title .sep {
    margin: 0 5px;
}

.run-actions {
    display: flex;
    align-items: center;
    align-self: flex-start;
    gap: 26px;
}

.primary-btn {
    height: 48px;
    padding: 0 18px;
    border-radius: 6px;
    background: #ff6c37;
    color: #fff;
    font-weight: 600;
}

.text-btn {
    gap: 8px;
}

.automate {
    gap: 4px;
    margin: 0 14px 0 4px;
}

.summary {
    display: flex;
    gap: 72px;
    margin: 15px 24px 0;
    padding: 27px 24px;
    background: #f9f9f9;
    color: #6b6b6b;
}

.summary dd {
    margin-top: 12px;
    font-size: 21px;
    font-weight: 600;
}

.result-tabs {
    display: flex;
    gap: 36px;
    padding: 12px 36px 12px 30px;
}

.result-tabs button {
    height: 48px;
    padding-top: 2px;
    border-bottom: 3px solid transparent;
}

.result-tabs .active {
    color: #212121;
    border-color: #ff6c37;
}

.result-tabs a {
    margin: 12px 0 0 auto;
}

/* results */
.results {
    flex: 1;
    min-height: 0;
    display: flex;
}

.result-list {
    flex: 1;
    overflow: hidden;
}

.result-list h3 {
    height: 36px;
    padding-left: 12px;
    background: #f9f9f9;
    font-size: 18px;
    line-height: 36px;
    font-weight: 400;
}

.iteration {
    padding: 0 24px 24px 30px;
}

.iteration article {
    margin-bottom: 1px;
}

.iteration article:nth-child(even) {
    margin-bottom: 2px;
}

.request {
    height: 60px;
    display: flex;
    align-items: center;
    white-space: nowrap;
}

.request b {
    width: 57px;
    color: #ffb400;
    font-size: 16px;
    font-weight: 700;
}

.request .url {
    margin: 0 42px 0 18px;
    color: #a6a6a6;
    font-size: 16px;
}

.request .path {
    color: #a6a6a6;
}

.chips {
    display: flex;
    gap: 12px;
    margin-left: auto;
    color: #a6a6a6;
    font-size: 16px;
    font-weight: 700;
}

.chips span {
    padding: 0 6px;
    border-radius: 6px;
    background: #f9f9f9;
}

.test {
    height: 60px;
    display: flex;
    align-items: center;
    margin-left: 12px;
    padding-top: 2px;
    border-left: 3px solid #0cbb52;
}

.test span:first-child {
    width: 75px;
    margin-left: 42px;
}

.scrollbar {
    width: 18px;
    padding: 4px;
}

.thumb {
    width: 10px;
    height: 352px;
    border-radius: 5px;
    background: #a6a6a6;
}

.iteration-nav {
    width: 61px;
    border-left: 2px solid #ededed;
}

.iteration-nav a {
    display: block;
    height: 46px;
    padding-top: 1px;
    padding-left: 3px;
    font-size: 16px;
    line-height: 46px;
    text-align: center;
    text-decoration: none;
}

.iteration-nav .visible {
    background: #fff0eb;
}

/* status bar */
.statusbar {
    height: 37px;
    flex: none;
    display: flex;
    align-items: center;
    gap: 17px;
    padding: 0 10px 0 11px;
    border-top: 1px solid #e6e6e6;
    font-size: 16px;
}

.statusbar button {
    gap: 6px;
}

.pane-btn {
    margin-right: 4px;
}

.console-btn {
    margin-left: 20px;
}

.status-right {
    display: flex;
    gap: 22px;
    margin-left: auto;
}

/* taskbar */
.taskbar {
    height: 60px;
    flex: none;
    display: flex;
    background: linear-gradient(#05090d, #000);
}

.task {
    position: relative;
    width: 75px;
    flex: none;
    display: flex;
    align-items: center;
    justify-content: center;
}

.task svg {
    width: 36px;
    height: 36px;
}

.task.system {
    width: 74px;
}

.task.running::after {
    content: "";
    position: absolute;
    left: 7px;
    right: 7px;
    bottom: 0;
    height: 3px;
    background: #0078d7;
}

.task.multi::after {
    background: linear-gradient(90deg, #0078d7 80%, #66aee7 80%);
}

.task.current {
    background: linear-gradient(#a0a0a0, #a0a0a0) center / 73px 100% no-repeat;
}

.task.current::after {
    left: 1px;
    right: 1px;
}

.glyph {
    fill: #fff;
    font-size: 16px;
    font-weight: 700;
}

.glyph.pr {
    fill: #9999ff;
}

.glyph.ij {
    font-size: 13px;
}

.glyph.tiny {
    font-size: 9px;
    font-weight: 400;
}

.tray {
    position: relative;
    flex: 1;
    display: flex;
    align-items: center;
    justify-content: flex-end;
    gap: 12px;
    padding-right: 20px;
}

.tray-icon {
    width: 24px;
    height: 24px;
    flex: none;
    fill: none;
    stroke: #000;
    stroke-width: 2;
}

.sync {
    position: relative;
    display: flex;
}

.sync i {
    position: absolute;
    right: -3px;
    bottom: 0;
    width: 11px;
    height: 11px;
    border-radius: 50%;
    background: #2d74c4;
}

.ime {
    color: #252b35;
    font-size: 24px;
}

.pinyin {
    width: 22px;
    margin-left: 9px;
    background: #fff;
    color: #000;
    font-size: 20px;
    line-height: 22px;
    text-align: center;
}

.clock {
    align-self: flex-start;
    margin: 4px 22px 0 38px;
    color: #0c0e10;
}

.notify {
    width: 60px;
    height: 60px;
    display: flex;
    align-items: center;
    justify-content: center;
    background: #333;
}

.notify .tray-icon {
    stroke: #0b0b0b;
}

.watermark {
    position: absolute;
    right: 16px;
    bottom: 7px;
    color: #a8a8a8;
    font-family: "Noto Sans", sans-serif;
    font-size: 18px;
}
```
